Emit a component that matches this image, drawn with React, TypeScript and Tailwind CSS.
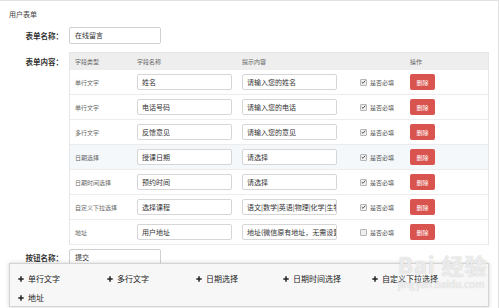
import React from "react";

const rows = [
  { type: "单行文字", name: "姓名", hint: "请输入您的姓名", req: true },
  { type: "单行文字", name: "电话号码", hint: "请输入您的电话", req: true },
  { type: "多行文字", name: "反馈意见", hint: "请输入您的意见", req: true },
  { type: "日期选择", name: "授课日期", hint: "请选择", req: true, hl: true },
  { type: "日期时间选择", name: "预约时间", hint: "请选择", req: true },
  { type: "自定义下拉选择", name: "选择课程", hint: "语文|数学|英语|物理|化学|生物", req: true },
  { type: "地址", name: "用户地址", hint: "地址(微信原有地址，无需设置", req: false },
];

function Check({ on }: { on: boolean }) {
  return (
    <span className="flex h-[7px] w-[7px] items-center justify-center rounded-[1px] border border-[#b5b5b5] bg-[#efefef]">
      {on && (
        <svg width="6" height="6" viewBox="0 0 10 10">
          <path d="M1.5 5.2 L4 7.6 L8.6 2.2" fill="none" stroke="#444" strokeWidth="1.8" />
        </svg>
      )}
    </span>
  );
}

function Plus() {
  return (
    <svg width="6" height="6" viewBox="0 0 6 6" className="shrink-0">
      <path d="M3 0.3 V5.7 M0.3 3 H5.7" stroke="#222" strokeWidth="1.5" />
    </svg>
  );
}

export default function App() {
  const adds = ["单行文字", "多行文字", "日期选择", "日期时间选择", "自定义下拉选择", "地址"];
  return (
    <div className="relative h-[308px] w-[500px] overflow-hidden bg-white font-['Noto_Sans_CJK_SC','Noto_Sans',sans-serif] text-[#333]">
      <div className="h-full w-[499px] border-r border-t border-[#e2e2e2]">
        <div className="pl-[9px] pt-[8px] text-[7px] leading-[10px] text-[#444]">用户表单</div>

        <div className="mt-[8px] flex items-center">
          <div className="w-[69px] pr-[6px] text-right text-[7.5px] font-bold leading-[10px] text-[#333]">表单名称：</div>
          <div className="flex h-[17px] w-[92px] items-center rounded-[2px] border border-[#d0d0d0] px-[5px] text-[7px] text-[#333]">在线留言</div>
        </div>

        <div className="mt-[8px] flex items-start">
          <div className="w-[69px] pr-[6px] pt-[5px] text-right text-[7.5px] font-bold leading-[10px] text-[#333]">表单内容：</div>
          <div className="w-[420px] border-l border-r border-t border-[#e6e6e6]">
            <div className="grid h-[17px] grid-cols-[61px_105px_118px_50px_1fr] items-center bg-[#eeeeee] text-[6px] text-[#666]">
              <div className="pl-[5px]">字段类型</div>
              <div className="pl-[6px]">字段名称</div>
              <div className="pl-[6px]">提示内容</div>
              <div />
              <div className="pl-[6px]">操作</div>
            </div>
            {rows.map((r, i) => (
              <div
                key={i}
                className={`grid h-[25px] grid-cols-[61px_105px_118px_50px_1fr] items-center border-b border-[#ececec] ${r.hl ? "bg-[#f4f8fb]" : "bg-white"}`}
              >
                <div className="pl-[5px] text-[6px] text-[#666]">{r.type}</div>
                <div className="pl-[6px]">
                  <div className="flex h-[16px] w-[95px] items-center rounded-[2px] border border-[#d6d6d6] bg-white px-[4px] text-[7px] text-[#333]">{r.name}</div>
                </div>
                <div className="pl-[6px]">
                  <div className="flex h-[16px] w-[95px] items-center overflow-hidden whitespace-nowrap rounded-[2px] border border-[#d6d6d6] bg-white px-[4px] text-[7px] text-[#333]">{r.hint}</div>
                </div>
                <div className="flex items-center gap-[3px] pl-[6px] text-[6px] text-[#555]">
                  <Check on={r.req} />
                  <span className="whitespace-nowrap">是否必填</span>
                </div>
                <div className="pl-[6px]">
                  <div className="flex h-[16px] w-[25px] items-center justify-center rounded-[2px] bg-[#d9534f] text-[6px] text-white">删除</div>
                </div>
              </div>
            ))}
          </div>
        </div>

        <div className="mt-[4px] flex items-center">
          <div className="w-[69px] pr-[6px] text-right text-[7.5px] font-bold leading-[10px] text-[#333]">按钮名称：</div>
          <div className="flex h-[17px] w-[92px] items-center rounded-[2px] border border-[#d0d0d0] px-[5px] text-[7px] text-[#333]">提交</div>
        </div>
      </div>

      <div className="absolute left-[9px] top-[263px] h-[44px] w-[480px] border border-[#d4d4d4] bg-[#f7f7f7] shadow-[0_0_4px_rgba(0,0,0,0.18)]">
        <div className="grid grid-cols-[89px_89px_87px_89px_1fr] gap-y-[7px] pl-[8px] pt-[9px]">
          {adds.map((a) => (
            <div key={a} className="flex h-[12px] items-center gap-[4px] whitespace-nowrap text-[8px] text-[#222]">
              <Plus />
              <span>{a}</span>
            </div>
          ))}
        </div>
      </div>

      <div className="pointer-events-none absolute left-[398px] top-[252px] select-none text-[#ffffff]/70">
        <div className="text-[22px] font-bold leading-[24px] tracking-[1px] [text-shadow:0_0_1px_#bbb]">Bai 经验</div>
        <div className="mt-[2px] text-[10px] leading-[12px] [text-shadow:0_0_1px_#bbb]">jingyan.baidu.com</div>
      </div>
    </div>
  );
}
